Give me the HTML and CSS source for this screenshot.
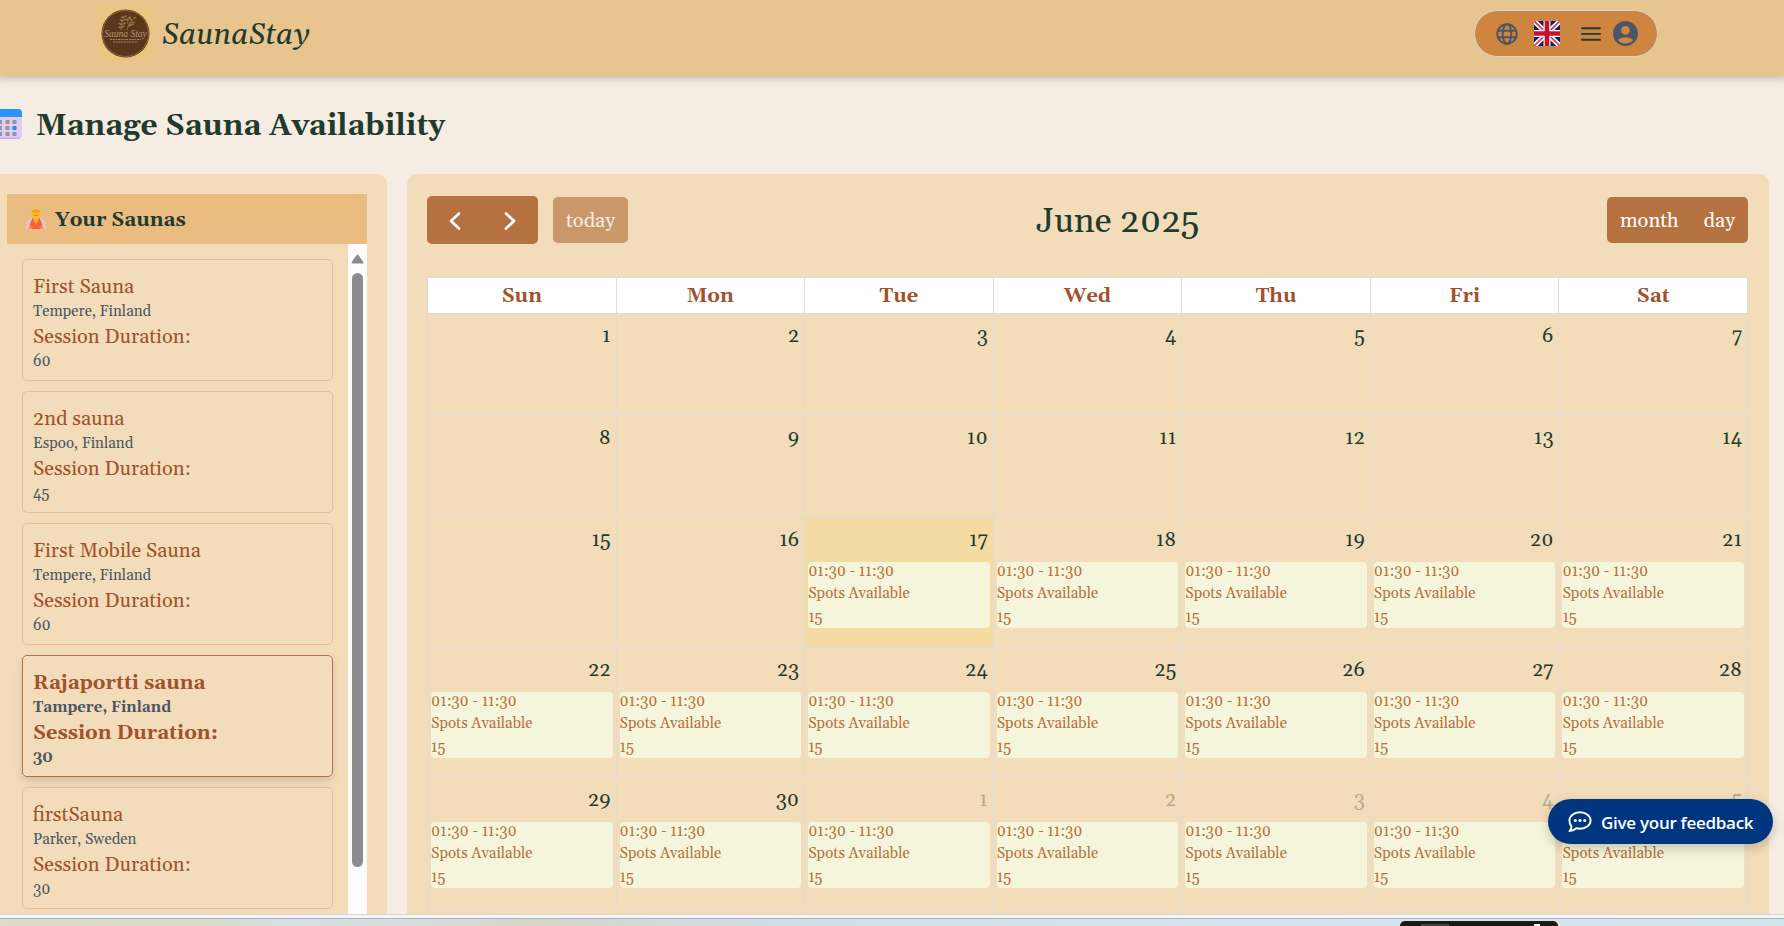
FILE: index.html
```html
<!DOCTYPE html>
<html lang="en">
<head>
<meta charset="utf-8">
<title>SaunaStay</title>
<link rel="stylesheet" href="styles.css">
</head>
<body>
<div class="app">
  <header class="topbar">
    <div class="brand">
      <svg class="logo" viewBox="0 0 55 55">
        <rect width="55" height="55" fill="#ebc582"/>
        <circle cx="27.500" cy="27.500" r="24" fill="#5a371c"/>
        <circle cx="27.500" cy="27.500" r="23" fill="none" stroke="#8f6a37" stroke-width="1"/>
        <g stroke="#93734a" stroke-width=".8" fill="none" stroke-linecap="round">
          <path d="M23 24c0-5 1-9 3-14M29 24c1-5 3-8 6-11M30 18c-1-3 0-5 1-7"/>
          <path stroke-width="1.600" d="M21 21l2 1M26 20l-2 1M21.500 17.500l2 1M27 17l-2 1M22.500 14l2 1M28 13.500l-2 .5M24 11l1.500.5M28 10l-1 1M29 13l1 1.500M32 11l-1 1.500M31 20l2-1M34 16l2 .5M33 14l-.5-1.500M36 12l1.500-.5M32 18l3 .5"/>
        </g>
        <text x="27.500" y="31" class="logo-name">Sauna Stay</text>
        <path d="M12 33.500h31M15 36h25" stroke="#a3835a" stroke-width="1" stroke-dasharray="2 .7"/>
      </svg>
      <span class="brand-name">SaunaStay</span>
    </div>
    <div class="user-pill">
      <svg class="globe" viewBox="0 0 22 22" fill="none" stroke="#4b5563" stroke-width="2">
        <circle cx="11" cy="11" r="9.700"/><ellipse cx="11" cy="11" rx="4.300" ry="9.700"/><path d="M2 7.700h18M2 14.300h18"/>
      </svg>
      <svg class="flag" viewBox="0 0 26 25">
        <rect width="26" height="25" fill="#012169"/>
        <path d="M0 0l26 25M26 0L0 25" stroke="#fff" stroke-width="5"/>
        <path d="M0 0l26 25M26 0L0 25" stroke="#d8405a" stroke-width="1.800"/>
        <path d="M13 0v25M0 12.500h26" stroke="#fff" stroke-width="7"/>
        <path d="M13 0v25M0 12.500h26" stroke="#c8102e" stroke-width="4.600"/>
      </svg>
      <svg class="burger" viewBox="0 0 20 14" stroke="#1f3b2d" stroke-width="1.900" stroke-linecap="round"><path d="M1 1.200h18M1 6.900h18M1 12.700h18"/></svg>
      <svg class="avatar" viewBox="2 2 20 20" fill="#4b5563"><path d="M12 2C6.480 2 2 6.480 2 12s4.480 10 10 10 10-4.480 10-10S17.520 2 12 2zm0 4c1.930 0 3.500 1.570 3.500 3.500S13.930 13 12 13s-3.500-1.570-3.500-3.500S10.070 6 12 6zm0 14c-2.030 0-4.430-.82-6.140-2.880C7.550 15.800 9.680 15 12 15s4.450.8 6.140 2.120C16.430 19.180 14.030 20 12 20z"/></svg>
    </div>
  </header>

  <h1 class="page-title">
    <svg class="cal-icon" viewBox="0 0 30 30">
      <rect width="30" height="30" rx="4" fill="#dfcdee"/>
      <path d="M0 8V4a4 4 0 0 1 4-4h22a4 4 0 0 1 4 4v4z" fill="#2b95fb"/>
      <path d="M2 29.300h26" stroke="#cfa9f0" stroke-width="1.400"/>
      <g fill="#9a90a8"><path d="M6 11h4v4H6zM13.500 11h4v4h-4zM20.500 11h4v4h-4zM6 17h4v4H6zM13.500 17h4v4h-4zM6 23h4v4H6zM13.500 23h4v4h-4zM20.500 23h4v4h-4z"/></g>
      <path d="M20.500 17h4v4h-4z" fill="#2196f3"/>
    </svg>
    <span>Manage Sauna Availability</span>
  </h1>

  <main class="columns">
    <aside class="side">
      <h2 class="side-head">
        <svg class="person" viewBox="0 0 20 20">
          <path d="M0 20c-.5-5 2-10 5-11h10c3 1 5.500 6 5 11z" fill="#e6c3cf"/>
          <path d="M3.500 16l3-7h7l3 7-2 4h-9z" fill="#f4623e"/>
          <path d="M7 9h6l-3 7z" fill="#fbb52b"/>
          <circle cx="10" cy="5" r="4.800" fill="#fcb82e"/>
          <path d="M5.800 3.500a4.200 3.300 0 0 1 8.400 0z" fill="#f5a224"/>
          <path d="M8.300 6.500h3.400" stroke="#d67a1c" stroke-width=".8"/>
          <path d="M2.500 19l4-1.500M17.500 19l-4-1.500" stroke="#f08a30" stroke-width="1.500"/>
        </svg>
        <span>Your Saunas</span>
      </h2>
      <div class="side-body">
        <div class="cards" id="cards"></div>
        <div class="scrollbar">
          <svg class="arrow" viewBox="0 0 13 10"><path d="M6.500 1.500L11.500 8.500h-10z" fill="#8b8b8b" stroke="#8b8b8b" stroke-width="2" stroke-linejoin="round"/></svg>
          <div class="thumb"></div>
        </div>
      </div>
    </aside>

    <section class="panel">
      <div class="toolbar">
        <div class="tools">
          <div class="btns nav">
            <svg viewBox="0 0 12 18"><path d="M10 1.500L2 9l8 7.500"/></svg>
            <svg viewBox="0 0 12 18"><path d="M2 1.500L10 9l-8 7.500"/></svg>
          </div>
          <div class="btns today">today</div>
        </div>
        <h2 class="month">June 2025</h2>
        <div class="btns views"><span>month</span><span>day</span></div>
      </div>
      <div class="grid" id="grid"></div>
    </section>
  </main>
</div>
<div class="feedback">
  <svg class="chat" viewBox="0 0 24 22" fill="none" stroke="#fff" stroke-width="1.900" stroke-linejoin="round">
    <path d="M12 1.300c6 0 10.600 3.600 10.600 8.200S18 17.700 12 17.700c-1.300 0-2.500-.2-3.600-.5C6.700 18.800 4.200 19.900 1.500 20c1.200-1.200 2-2.700 2-4.300C2.200 14 1.400 11.800 1.400 9.500 1.400 4.900 6 1.300 12 1.300z"/>
    <g fill="#fff" stroke="none"><circle cx="7.300" cy="9.500" r="1.500"/><circle cx="12" cy="9.500" r="1.500"/><circle cx="16.700" cy="9.500" r="1.500"/></g>
  </svg>
  <span>Give your feedback</span>
</div>
<footer class="desktop"><div class="window-peek"><i class="peek-tab"></i><i class="peek-dot"></i></div></footer>
<script src="app.js"></script>
</body>
</html>
```
FILE: app.js
```js
const saunas = [
  ["First Sauna", "Tempere, Finland", 60],
  ["2nd sauna", "Espoo, Finland", 45],
  ["First Mobile Sauna", "Tempere, Finland", 60],
  ["Rajaportti sauna", "Tampere, Finland", 30],
  ["firstSauna", "Parker, Sweden", 30]
];
document.getElementById("cards").innerHTML = saunas.map(([name, place, mins], i) =>
  `<div class="card${i === 3 ? " selected" : ""}"><div class="lead">${name}</div><div class="sub">${place}</div>
  <div class="lead">Session Duration:</div><div class="sub">${mins}</div></div>`).join("");

let html = ["Sun", "Mon", "Tue", "Wed", "Thu", "Fri", "Sat"].map(d => `<div class="dow">${d}</div>`).join("");
for (let n = 1; n <= 42; n++) {
  const other = n > 30;
  const cls = "cell" + (n === 17 ? " now" : "") + (other ? " other" : "");
  const event = n >= 17 && n <= 35
    ? `<div class="event"><div>01:30 - 11:30</div><div>Spots Available</div><div>15</div></div>` : "";
  html += `<div class="${cls}"><div class="num">${n > 35 ? "" : other ? n - 30 : n}</div>${event}</div>`;
}
document.getElementById("grid").innerHTML = html;
```
FILE: styles.css
```css
* { box-sizing: border-box; }
body {
  margin: 0;
  height: 926px;
  overflow: hidden;
  background: #f5ede3;
  color: #1f3b2d;
  font-family: Gelasio, Georgia, "Liberation Serif", serif;
  font-size: 20px;
  display: flex;
  flex-direction: column;
}
h1, h2 { margin: 0; }
svg { display: block; flex: none; }
.app { height: 914px; overflow: hidden; display: flex; flex-direction: column; }

.topbar {
  flex: none;
  height: 76px;
  padding: 6px 126px 0 98px;
  display: flex;
  justify-content: space-between;
  align-items: flex-start;
  background: #e8c48f;
  box-shadow: 0 -2px 8px 4px rgba(0, 0, 0, .24);
}
.brand { display: flex; height: 55px; align-items: center; gap: 9px; }
.logo { width: 55px; height: 55px; }
.logo-name { font-family: "Liberation Serif", serif; font-style: italic; font-size: 9.500px; fill: #b8966a; text-anchor: middle; }
.brand-name { font-size: 30px; font-style: italic; line-height: 40px; padding-top: 2px; letter-spacing: .1px; }
.user-pill {
  width: 184px;
  height: 47px;
  margin-top: 4px;
  border: 1px solid #d1d5db;
  border-radius: 24px;
  background: #cd853f;
  display: flex;
  align-items: center;
  padding-left: 21px;
}
.globe { width: 22px; height: 22px; }
.flag { width: 26px; height: 25px; margin-left: 16px; }
.burger { width: 20px; height: 14px; margin-left: 21px; }
.avatar { width: 25px; height: 25px; margin-left: 12px; }

.page-title {
  flex: none;
  height: 98px;
  display: flex;
  align-items: center;
  gap: 14px;
  margin-left: -8px;
  font-size: 30px;
}
.page-title span { padding-top: 1px; }
.cal-icon { width: 30px; height: 30px; margin-bottom: 2px; }

.columns { flex: none; display: flex; gap: 20px; height: 760px; }
.side { width: 387px; background: #f2dcba; border-radius: 0 10px 0 0; padding: 20px 20px 0 7px; }
.side-head {
  height: 50px;
  padding-left: 19px;
  display: flex;
  align-items: center;
  gap: 9px;
  background: #ebbc82;
  font-size: 20px;
}
.side-head span { padding-top: 2px; }
.person { width: 20px; height: 20px; }
.side-body { display: flex; height: 670px; }
.cards { flex: 1; padding: 15px 15px 0 15px; display: flex; flex-direction: column; gap: 10px; }
.card { flex: none; height: 122px; border: 1px solid #e6c08f; border-radius: 5px; padding: 12px 10px 0; }
.lead { font-size: 20px; line-height: 30px; color: #a0522d; }
.sub { font-size: 15px; line-height: 20px; color: #4b5563; }
.selected { border-color: #b57240; font-weight: bold; box-shadow: 0 4px 8px rgba(0, 0, 0, .13); }
.scrollbar { width: 19px; background: #fcfcfc; padding: 10px 3px 0; display: flex; flex-direction: column; align-items: center; gap: 9px; }
.arrow { width: 13px; height: 10px; }
.thumb { width: 11px; height: 594px; border-radius: 6px; background: #8b8b8b; }

.panel { width: 1362px; background: #f2dcba; border-radius: 10px 10px 0 0; padding: 22px 20px 0; }
.toolbar { height: 48px; display: flex; justify-content: space-between; align-items: center; }
.tools { display: flex; align-items: center; gap: 15px; }
.btns { height: 46px; display: flex; align-items: center; border-radius: 5px; background: #b57240; color: #fff; padding-top: 2px; }
.nav { width: 111px; height: 48px; padding: 2px 22px 0; justify-content: space-between; }
.nav svg { width: 12px; height: 18px; fill: none; stroke: #fff; stroke-width: 2.700; stroke-linecap: round; stroke-linejoin: round; }
.today { width: 75px; justify-content: center; background: #ca976a; color: #f9eee0; }
.views { width: 141px; margin-right: 1px; padding: 2px 13px 0; justify-content: space-between; }
.month { font-size: 35px; font-weight: normal; padding-top: 4px; }

.grid {
  width: 1321px;
  margin-top: 33px;
  display: grid;
  grid-template-columns: repeat(7, 1fr);
  grid-template-rows: 36px 102px 102px 130px 130px 130px 130px;
  border-top: 1px solid #dddcd6;
  border-left: 1px solid #dddcd6;
  height: 637px;
  overflow: hidden;
}
.dow { background: #fff; color: #a0522d; font-weight: bold; display: flex; align-items: center; justify-content: center; padding-top: 1px; }
.dow, .cell { border-right: 1px solid #dddcd6; border-bottom: 1px solid #dddcd6; min-width: 0; }
.cell { padding: 7px 3px 0 3px; }
.num { height: 37px; padding-right: 2px; line-height: 30px; text-align: right; }
.other .num { opacity: .3; }
.now { background: #f4dba2; }
.event { height: 66px; background: #f5f5dc; border-radius: 4px; color: #b57240; font-size: 15px; line-height: 24px; overflow: hidden; }
.event div:first-child { line-height: 20px; }

.feedback {
  position: absolute;
  left: 1548px;
  top: 799px;
  width: 225px;
  height: 45px;
  border-radius: 23px;
  background: #003580;
  color: #fff;
  display: flex;
  align-items: center;
  gap: 9px;
  padding-left: 20px;
  font: 600 17px "Open Sans", "Noto Sans", sans-serif;
  letter-spacing: -.28px;
  white-space: nowrap;
  box-shadow: 0 4px 12px rgba(0, 0, 0, .2);
}
.feedback span { padding-top: 2px; }
.chat { width: 24px; height: 22px; }

.desktop {
  height: 12px;
  border-top: 1px solid #d8d8d8;
  background: linear-gradient(#f5f5f5 0 3px, #aeb4b8 3px 4px, transparent 4px),
    linear-gradient(90deg, #dcdccf 0, #d9dccb 11%, #d6dfe3 16%, #d9dcdb 24%, #d5d5cb 30%, #d3deea 45%, #d6e3f0 85%, #cfe3ec 100%);
  padding: 6px 0 0 1400px;
}
.window-peek { width: 158px; height: 5px; background: #1a1a1a; border-radius: 5px 5px 0 0; display: flex; padding-top: 3px; }
.peek-tab { width: 28px; height: 2px; margin-left: 21px; background: #444; }
.peek-dot { width: 6px; height: 2px; margin-left: 85px; background: #fff; }
```
